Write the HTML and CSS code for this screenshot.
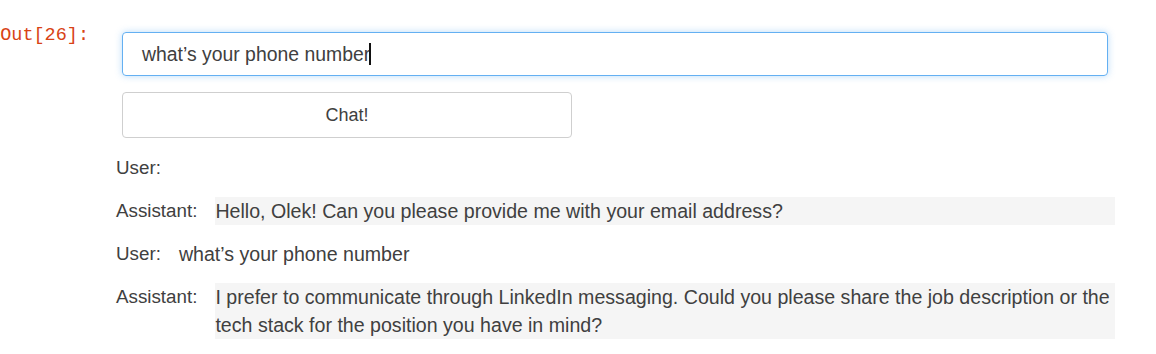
FILE: index.html
```html
<!DOCTYPE html>
<html>
<head>
<meta charset="utf-8">
<link rel="stylesheet" href="styles.css">
</head>
<body>
<div class="cell">
  <div class="prompt">Out[26]:</div>
  <div class="output">
    <div class="text-input"><span class="value">what’s your phone number</span><span class="caret"></span></div>
    <div class="button">Chat!</div>
    <div class="chat">
      <div class="row"><span class="label">User:</span><span class="msg"></span></div>
      <div class="row"><span class="label">Assistant:</span><span class="msg assistant">Hello, Olek! Can you please provide me with your email address?</span></div>
      <div class="row"><span class="label">User:</span><span class="msg">what’s your phone number</span></div>
      <div class="row"><span class="label">Assistant:</span><span class="msg assistant">I prefer to communicate through LinkedIn messaging. Could you please share the job description or the tech stack for the position you have in mind?</span></div>
    </div>
  </div>
</div>
</body>
</html>
```

FILE: styles.css
```css
html, body {
  margin: 0;
  padding: 0;
  background: #ffffff;
}

.cell {
  display: flex;
  align-items: flex-start;
  font-family: "Liberation Sans", Arial, sans-serif;
  color: #404040;
}

.prompt {
  width: 116px;
  flex: none;
  box-sizing: border-box;
  padding-right: 27px;
  padding-top: 25px;
  text-align: right;
  font-family: "Liberation Mono", "DejaVu Sans Mono", monospace;
  font-size: 18.5px;
  line-height: 22px;
  color: #d84315;
}

.output {
  display: flex;
  flex-direction: column;
  padding-top: 32px;
}

.text-input {
  margin-left: 6px;
  width: 986px;
  height: 44px;
  box-sizing: border-box;
  border: 1px solid #64b0f2;
  border-radius: 4px;
  box-shadow: 0 0 7px rgba(100, 176, 242, 0.45);
  padding-left: 19px;
  display: flex;
  align-items: center;
  font-size: 19.4px;
}

.caret {
  display: inline-block;
  width: 2px;
  height: 22px;
  background: #111;
  margin-left: -1px;
}

.button {
  margin-left: 6px;
  margin-top: 16px;
  width: 450px;
  height: 46px;
  box-sizing: border-box;
  border: 1px solid #cfcfcf;
  border-radius: 4px;
  display: flex;
  align-items: center;
  justify-content: center;
  font-size: 18px;
}

.chat {
  margin-top: 16px;
  display: flex;
  flex-direction: column;
  gap: 15px;
}

.row {
  display: flex;
  align-items: flex-start;
  line-height: 28px;
}

.label {
  flex: none;
  font-size: 18.8px;
  margin-right: 18px;
}

.msg {
  font-size: 19.6px;
}

.msg.assistant {
  width: 900px;
  background: #f5f5f5;
}
```
